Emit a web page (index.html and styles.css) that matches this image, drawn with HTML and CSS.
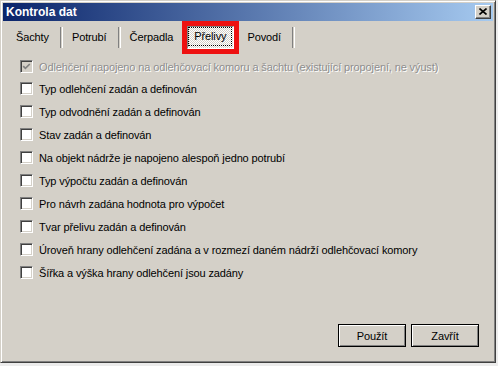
FILE: index.html
```html
<!DOCTYPE html>
<html lang="cs">
<head>
<meta charset="utf-8">
<title>Kontrola dat</title>
<link rel="stylesheet" href="styles.css">
</head>
<body>
<div class="window">
  <div class="titlebar">
    <span class="title">Kontrola dat</span>
    <span class="close">
      <svg width="8" height="7" viewBox="0 0 8 7"><path d="M0.5 0.5 L7.5 6.5 M7.5 0.5 L0.5 6.5" stroke="#000" stroke-width="1.6" fill="none"/></svg>
    </span>
  </div>
  <div class="tabs">
    <span class="tab">Šachty</span>
    <span class="sep"></span>
    <span class="tab">Potrubí</span>
    <span class="sep"></span>
    <span class="tab">Čerpadla</span>
    <span class="highlight"><span class="tab active"><span class="focus">Přelivy</span></span></span>
    <span class="tab">Povodí</span>
    <span class="sep"></span>
  </div>
  <div class="checks">
    <label class="check first disabled"><span class="box checked"><svg width="9" height="9" viewBox="0 0 9 9"><path d="M1.2 4.2 L3.4 6.4 L7.8 2" stroke="#808080" stroke-width="1.7" fill="none"/></svg></span><span class="label">Odlehčení napojeno na odlehčovací komoru a šachtu (existující propojení, ne výust)</span></label>
    <label class="check"><span class="box"></span><span class="label">Typ odlehčení zadán a definován</span></label>
    <label class="check"><span class="box"></span><span class="label">Typ odvodnění zadán a definován</span></label>
    <label class="check"><span class="box"></span><span class="label">Stav zadán a definován</span></label>
    <label class="check"><span class="box"></span><span class="label">Na objekt nádrže je napojeno alespoň jedno potrubí</span></label>
    <label class="check"><span class="box"></span><span class="label">Typ výpočtu zadán a definován</span></label>
    <label class="check"><span class="box"></span><span class="label">Pro návrh zadána hodnota pro výpočet</span></label>
    <label class="check"><span class="box"></span><span class="label">Tvar přelivu zadán a definován</span></label>
    <label class="check"><span class="box"></span><span class="label">Úroveň hrany odlehčení zadána a v rozmezí daném nádrží odlehčovací komory</span></label>
    <label class="check"><span class="box"></span><span class="label">Šířka a výška hrany odlehčení jsou zadány</span></label>
  </div>
  <div class="footer">
    <button class="btn">Použít</button>
    <button class="btn">Zavřít</button>
  </div>
</div>
</body>
</html>
```
FILE: styles.css
```css
html, body {
  margin: 0;
  padding: 0;
  background: #ececec;
}
body {
  font-family: "Liberation Sans", Arial, sans-serif;
  font-size: 11px;
  letter-spacing: -0.12px;
  color: #000;
}
.window {
  width: 496px;
  height: 363px;
  box-sizing: border-box;
  background: #d4d0c8;
  border: 1px solid;
  border-color: #d4d0c8 #404040 #404040 #d4d0c8;
  box-shadow: inset 1px 1px #fff, inset -1px -1px #808080;
  padding: 2px;
  display: flex;
  flex-direction: column;
}
.titlebar {
  height: 18px;
  flex: none;
  background: linear-gradient(to right, #0a246a, #a6caf0);
  display: flex;
  align-items: center;
  justify-content: space-between;
  padding: 0 2px 0 3px;
}
.title {
  color: #fff;
  font-weight: bold;
  font-size: 12px;
  letter-spacing: 0;
  line-height: 18px;
}
.close {
  width: 16px;
  height: 14px;
  box-sizing: border-box;
  background: #d4d0c8;
  border: 1px solid;
  border-color: #fff #404040 #404040 #fff;
  box-shadow: inset -1px -1px #808080;
  display: flex;
  align-items: center;
  justify-content: center;
}
.close svg { display: block; margin-top: -1px; }
.tabs {
  height: 33px;
  flex: none;
  display: flex;
  align-items: center;
  padding-left: 5px;
}
.tab {
  padding: 0 8px;
  line-height: 23px;
  white-space: nowrap;
}
.sep {
  width: 1px;
  height: 21px;
  border-left: 1px solid #808080;
  border-right: 1px solid #fff;
  margin: 0 1px 0 3px;
}
.highlight {
  display: flex;
  border: 5px solid #ee1111;
  margin-left: 1px;
}
.tab.active {
  height: 23px;
  box-sizing: border-box;
  padding: 1px 2px 1px 1px;
  border: 1px solid;
  border-color: #808080 #fff #fff #808080;
  background-color: #fff;
  background-image: conic-gradient(#d4d0c8 25%, #fff 0 50%, #d4d0c8 0 75%, #fff 0);
  background-size: 2px 2px;
  line-height: 17px;
}
.focus {
  display: block;
  padding: 0 5px;
  outline: 1px dotted #000;
}
.checks {
  display: flex;
  flex-direction: column;
  padding-left: 17px;
  margin-top: 2px;
}
.check {
  height: 23px;
  display: flex;
  align-items: center;
  gap: 6px;
  white-space: nowrap;
}
.check.first { height: 21px; }
.box {
  width: 13px;
  height: 13px;
  box-sizing: border-box;
  flex: none;
  background: #fff;
  border: 1px solid;
  border-color: #808080 #fff #fff #808080;
  box-shadow: inset 1px 1px #404040, inset -1px -1px #d4d0c8;
  display: flex;
  align-items: center;
  justify-content: center;
}
.box.checked { background: #d4d0c8; }
.box svg { display: block; }
.disabled .label {
  color: #8e8e8e;
  text-shadow: 1px 1px #fff;
}
.footer {
  margin-top: auto;
  display: flex;
  justify-content: flex-end;
  gap: 5px;
  padding: 0 14px 13px 0;
}
.btn {
  width: 68px;
  height: 23px;
  box-sizing: border-box;
  background: #d4d0c8;
  border: 1px solid #000;
  box-shadow: inset 1px 1px #fff, inset -1px -1px #808080;
  font-family: "Liberation Sans", Arial, sans-serif;
  font-size: 11px;
  letter-spacing: -0.12px;
  color: #000;
  padding: 0;
}
```
